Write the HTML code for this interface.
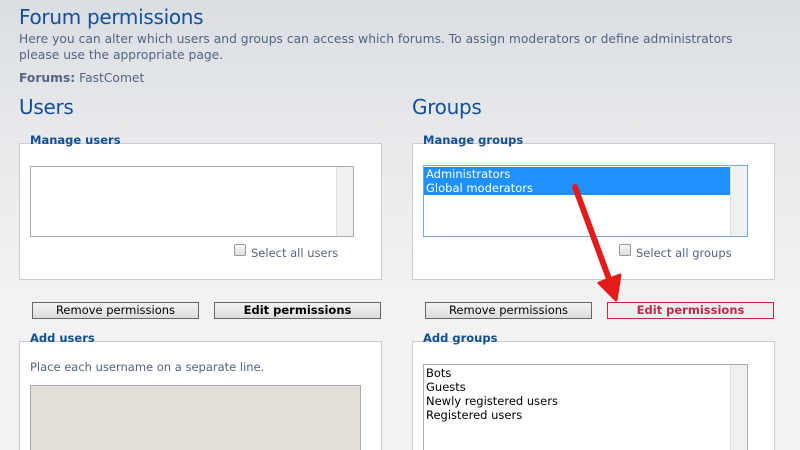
<!DOCTYPE html>
<html style="overflow:hidden;height:450px"><head><style>
body{margin:0;width:800px;height:450px;overflow:hidden;background:linear-gradient(#dadee3 0px,#e9eaec 150px,#f2f2f2 300px);font-family:"DejaVu Sans",Verdana,sans-serif;position:relative}
.a{position:absolute;white-space:nowrap}
h1{position:absolute;margin:0;font-weight:normal;color:#115098;font-size:20px;font-family:"DejaVu Sans",sans-serif;letter-spacing:-0.3px}
.p{color:#536482;font-size:12.3px}
.box{position:absolute;background:#fff;border:1px solid #ccc;box-sizing:border-box}
.lg{position:absolute;color:#115098;font-weight:bold;font-size:11.5px;background:transparent}
.lb{position:absolute;background:#fff;border:1px solid #aaa;font-size:11.5px;color:#000;box-sizing:border-box}
.sb{position:absolute;right:0;top:0;bottom:0;width:16px;background:#f0f0f0;border-left:1px solid #ddd}
.btn{position:absolute;height:15px;border:1px solid #666;background:linear-gradient(#f4f4f4,#dcdcdc);font-size:11.5px;text-align:center;line-height:15px;color:#000}
.cb{position:absolute;width:10px;height:10px;border:1px solid #999;border-radius:2px;background:linear-gradient(#f8f8f8,#ddd)}
.sel{background:#1e90ff;color:#fff;padding-left:2px;height:14px;line-height:14px;margin-right:16px}
.it{padding-left:2px;height:14px;line-height:14px}
</style></head><body>
<h1 style="left:19px;top:5px">Forum permissions</h1>
<div class="a p" style="left:19px;top:31px;line-height:16px">Here you can alter which users and groups can access which forums. To assign moderators or define administrators<br>please use the appropriate page.</div>
<div class="a p" style="left:19px;top:71px"><b>Forums:</b> FastComet</div>
<h1 style="left:19px;top:95px">Users</h1>
<h1 style="left:412px;top:95px">Groups</h1>

<div class="box" style="left:19px;top:143px;width:363px;height:137px"></div>
<div class="lg" style="left:30px;top:133px">Manage users</div>
<div class="lb" style="left:30px;top:166px;width:324px;height:71px"><div class="sb"></div></div>
<div class="cb" style="left:234px;top:244px"></div>
<div class="a p" style="left:251px;top:246px;font-size:11.5px">Select all users</div>

<div class="box" style="left:412px;top:143px;width:363px;height:137px"></div>
<div class="lg" style="left:423px;top:133px">Manage groups</div>
<div class="lb" style="left:423px;top:165px;width:325px;height:72px;border-color:#7aa7e0;padding-top:1px"><div class="sb"></div><div class="sel">Administrators</div><div class="sel">Global moderators</div></div>
<div class="cb" style="left:619px;top:244px"></div>
<div class="a p" style="left:636px;top:246px;font-size:11.5px">Select all groups</div>

<div class="btn" style="left:32px;top:302px;width:165px">Remove permissions</div>
<div class="btn" style="left:214px;top:302px;width:165px;font-weight:bold">Edit permissions</div>
<div class="btn" style="left:425px;top:302px;width:165px">Remove permissions</div>
<div class="btn" style="left:607px;top:302px;width:165px;font-weight:bold;color:#c0284a;border-color:#c0284a;background:#eee">Edit permissions</div>

<div class="box" style="left:19px;top:341px;width:363px;height:109px;border-bottom:none"></div>
<div class="lg" style="left:30px;top:331px">Add users</div>
<div class="a p" style="left:30px;top:360px;font-size:11.5px">Place each username on a separate line.</div>
<div class="lb" style="left:30px;top:385px;width:331px;height:65px;background:#e2dfd9;border-bottom:none"></div>

<div class="box" style="left:412px;top:341px;width:363px;height:109px;border-bottom:none"></div>
<div class="lg" style="left:423px;top:331px">Add groups</div>
<div class="lb" style="left:423px;top:364px;width:325px;height:86px;padding-top:1px;border-bottom:none"><div class="sb"></div><div class="it">Bots</div><div class="it">Guests</div><div class="it">Newly registered users</div><div class="it">Registered users</div></div>

<svg class="a" style="left:0;top:0" width="800" height="450">
<line x1="575" y1="187" x2="612" y2="287" stroke="#e31b1b" stroke-width="6" stroke-linecap="round"/>
<polygon points="599,283 620,275 616,300" fill="#e31b1b" stroke="#e31b1b" stroke-width="3" stroke-linejoin="round"/>
</svg>
</body></html>
